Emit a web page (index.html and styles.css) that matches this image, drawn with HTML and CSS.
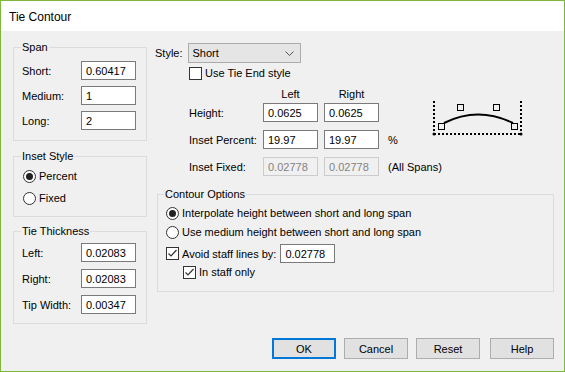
FILE: index.html
```html
<!DOCTYPE html>
<html lang="en">
  <head>
    <meta charset="UTF-8" />
    <title>Tie Contour</title>
    <link rel="stylesheet" href="styles.css">
  </head>
  <body>
    <div class="window">
      <div class="titlebar">Tie Contour</div>

      <div class="dialog">
        <div class="main">
          <div class="left-col">
            <div class="group span-group">
              <div class="group-title">Span</div>
              <div class="field-row"><label>Short:</label><input class="text-box" value="0.60417"></div>
              <div class="field-row"><label>Medium:</label><input class="text-box" value="1"></div>
              <div class="field-row"><label>Long:</label><input class="text-box" value="2"></div>
            </div>

            <div class="group inset-group">
              <div class="group-title">Inset Style</div>
              <div class="option-row"><span class="radio checked"></span>Percent</div>
              <div class="option-row"><span class="radio"></span>Fixed</div>
            </div>

            <div class="group thickness-group">
              <div class="group-title">Tie Thickness</div>
              <div class="field-row"><label>Left:</label><input class="text-box" value="0.02083"></div>
              <div class="field-row"><label>Right:</label><input class="text-box" value="0.02083"></div>
              <div class="field-row"><label>Tip Width:</label><input class="text-box" value="0.00347"></div>
            </div>
          </div>

          <div class="right-col">
            <div class="style-row">
              <span class="style-label">Style:</span>
              <div class="select">
                Short
                <svg width="9" height="5" viewBox="0 0 9 5">
                  <polyline points="0.5,0.5 4.5,4.5 8.5,0.5" fill="none" stroke="#555" stroke-width="1"></polyline>
                </svg>
              </div>
            </div>

            <div class="option-row tie-end"><span class="checkbox"></span>Use Tie End style</div>

            <div class="params">
              <span></span>
              <span class="col-head">Left</span>
              <span class="col-head">Right</span>
              <svg class="diagram" width="91" height="37" viewBox="0 0 91 37">
                <line x1="2" y1="2" x2="2" y2="35" stroke="#000" stroke-width="2" stroke-dasharray="2 2"></line>
                <line x1="89" y1="2" x2="89" y2="35" stroke="#000" stroke-width="2" stroke-dasharray="2 2"></line>
                <line x1="2" y1="35" x2="89" y2="35" stroke="#000" stroke-width="2" stroke-dasharray="2 2"></line>
                <circle cx="2" cy="35" r="1.5" fill="#000"></circle>
                <circle cx="89" cy="35" r="1.5" fill="#000"></circle>
                <path d="M 12 24 Q 46 7 81 24" fill="none" stroke="#000" stroke-width="2"></path>
                <rect x="25.5" y="5.5" width="6" height="6" fill="none" stroke="#000"></rect>
                <rect x="61.5" y="5.5" width="6" height="6" fill="none" stroke="#000"></rect>
                <rect x="6.5" y="24.5" width="6" height="6" fill="#f0f0f0" stroke="#000"></rect>
                <rect x="79.5" y="24.5" width="6" height="6" fill="#f0f0f0" stroke="#000"></rect>
              </svg>

              <span class="param-label">Height:</span>
              <input class="text-box" value="0.0625">
              <input class="text-box" value="0.0625">

              <span class="param-label">Inset Percent:</span>
              <input class="text-box" value="19.97">
              <input class="text-box" value="19.97">
              <span class="suffix">%</span>

              <span class="param-label">Inset Fixed:</span>
              <input class="text-box" value="0.02778" disabled>
              <input class="text-box" value="0.02778" disabled>
              <span class="suffix">(All Spans)</span>
            </div>

            <div class="group contour-group">
              <div class="group-title">Contour Options</div>
              <div class="option-row first"><span class="radio checked"></span>Interpolate height between short and long span</div>
              <div class="option-row"><span class="radio"></span>Use medium height between short and long span</div>
              <div class="option-row avoid">
                <span class="checkbox checked">
                  <svg width="11" height="11" viewBox="0 0 11 11"><polyline points="1.5,5.5 4,8 9.5,2" fill="none" stroke="#333" stroke-width="1.2"></polyline></svg>
                </span>
                Avoid staff lines by:
                <input class="text-box avoid-box" value="0.02778">
              </div>
              <div class="option-row in-staff">
                <span class="checkbox checked">
                  <svg width="11" height="11" viewBox="0 0 11 11"><polyline points="1.5,5.5 4,8 9.5,2" fill="none" stroke="#333" stroke-width="1.2"></polyline></svg>
                </span>
                In staff only
              </div>
            </div>
          </div>
        </div>

        <div class="buttons">
          <button type="button" class="default">OK</button>
          <button type="button">Cancel</button>
          <button type="button">Reset</button>
          <button type="button" class="help">Help</button>
        </div>
      </div>
    </div>
  </body>
</html>
```

FILE: styles.css
```css
:root {
  --face: #f0f0f0;
  --group-border: #dcdcdc;
  --box-border: #7a7a7a;
  --accent: #0078d7;
  --frame: #7db83a;
  --ui-font: 'Liberation Sans', Arial, sans-serif;
}

* {
  margin: 0;
  padding: 0;
  box-sizing: border-box;
}

body {
  font-family: var(--ui-font);
  font-size: 11px;
  color: #000;
  background: var(--face);
}

.window {
  width: 565px;
  height: 372px;
  border: 1px solid var(--frame);
  background: var(--face);
  display: flex;
  flex-direction: column;
}

.titlebar {
  height: 30px;
  background: #fff;
  padding-left: 8px;
  display: flex;
  align-items: center;
  font-size: 12px;
  padding-top: 2px;
}

.dialog {
  flex: 1;
  padding: 8px 10px 0 12px;
}

.main {
  display: flex;
  align-items: flex-start;
  gap: 8px;
}

.left-col {
  width: 134px;
  display: flex;
  flex-direction: column;
}

/* group boxes */
.group {
  border: 1px solid var(--group-border);
  padding: 0 10px 10px 8px;
}

.group-title {
  width: fit-content;
  margin: -9px 0 0 -1px;
  padding: 0 1px;
  line-height: 16px;
  background: var(--face);
}

.field-row {
  display: flex;
  align-items: center;
  justify-content: space-between;
  height: 19px;
}

.span-group {
  margin-top: 8px;
}

.span-group .field-row {
  margin-top: 6px;
}

.inset-group {
  margin-top: 15px;
}

.thickness-group {
  margin-top: 14px;
  padding-bottom: 9px;
}

.thickness-group .field-row {
  margin-top: 7px;
}

.thickness-group .field-row:nth-child(2) {
  margin-top: 4px;
}

.text-box {
  width: 55px;
  height: 19px;
  border: 1px solid var(--box-border);
  background: #fff;
  padding: 0 4px;
  font: inherit;
  color: #000;
  outline: none;
}

.text-box:disabled {
  border-color: #cccccc;
  background: var(--face);
  color: #838383;
}

/* radios and checkboxes */
.option-row {
  display: flex;
  align-items: center;
  height: 16px;
  gap: 3px;
}

.inset-group .option-row {
  margin-top: 4px;
  padding-left: 1px;
}

.inset-group .option-row + .option-row {
  margin-top: 6px;
}

.radio {
  width: 13px;
  height: 13px;
  border: 1px solid #333;
  border-radius: 50%;
  background: #fff;
  display: flex;
  align-items: center;
  justify-content: center;
  flex-shrink: 0;
}

.radio.checked::after {
  content: "";
  width: 7px;
  height: 7px;
  border-radius: 50%;
  background: #222;
}

.checkbox {
  width: 13px;
  height: 13px;
  border: 1px solid #333;
  background: #fff;
  display: flex;
  align-items: center;
  justify-content: center;
  flex-shrink: 0;
}

/* right column */
.right-col {
  padding-top: 4px;
}

.style-row {
  display: flex;
  align-items: center;
  gap: 5px;
}

.select {
  width: 113px;
  height: 20px;
  background: #e5e5e5;
  border: 1px solid #acacac;
  display: flex;
  align-items: center;
  justify-content: space-between;
  padding: 0 6px 0 4px;
}

.tie-end {
  margin: 2px 0 0 34px;
}

.params {
  display: grid;
  grid-template-columns: 68px 55px 55px 1fr;
  grid-template-rows: 9px 19px 19px 19px;
  column-gap: 6px;
  row-gap: 8px;
  margin: 5px 0 0 34px;
  align-items: center;
}

.col-head {
  align-self: start;
  line-height: 16px;
  text-align: center;
}

.diagram {
  grid-column: 4;
  grid-row: 1 / 3;
  align-self: start;
  margin: 13px 0 0 47px;
}

.suffix {
  margin-left: 3px;
}

.contour-group {
  width: 397px;
  margin: 18px 0 0 2px;
  padding: 0 10px 11px 7px;
}

.contour-group .option-row {
  margin-top: 3px;
  padding-left: 1px;
}

.contour-group .avoid {
  height: 19px;
  margin-top: 4px;
}

.avoid-box {
  width: 55px;
  margin-left: 1px;
}

.contour-group .in-staff {
  margin-top: 1px;
  padding-left: 18px;
}

/* buttons */
.buttons {
  display: flex;
  justify-content: flex-end;
  gap: 8px;
  margin-top: 14px;
}

button {
  width: 64px;
  height: 21px;
  background: #e1e1e1;
  border: 1px solid #adadad;
  font: inherit;
  color: #000;
}

button.default {
  border: 2px solid var(--accent);
}

button.help {
  margin-left: 2px;
}
```
